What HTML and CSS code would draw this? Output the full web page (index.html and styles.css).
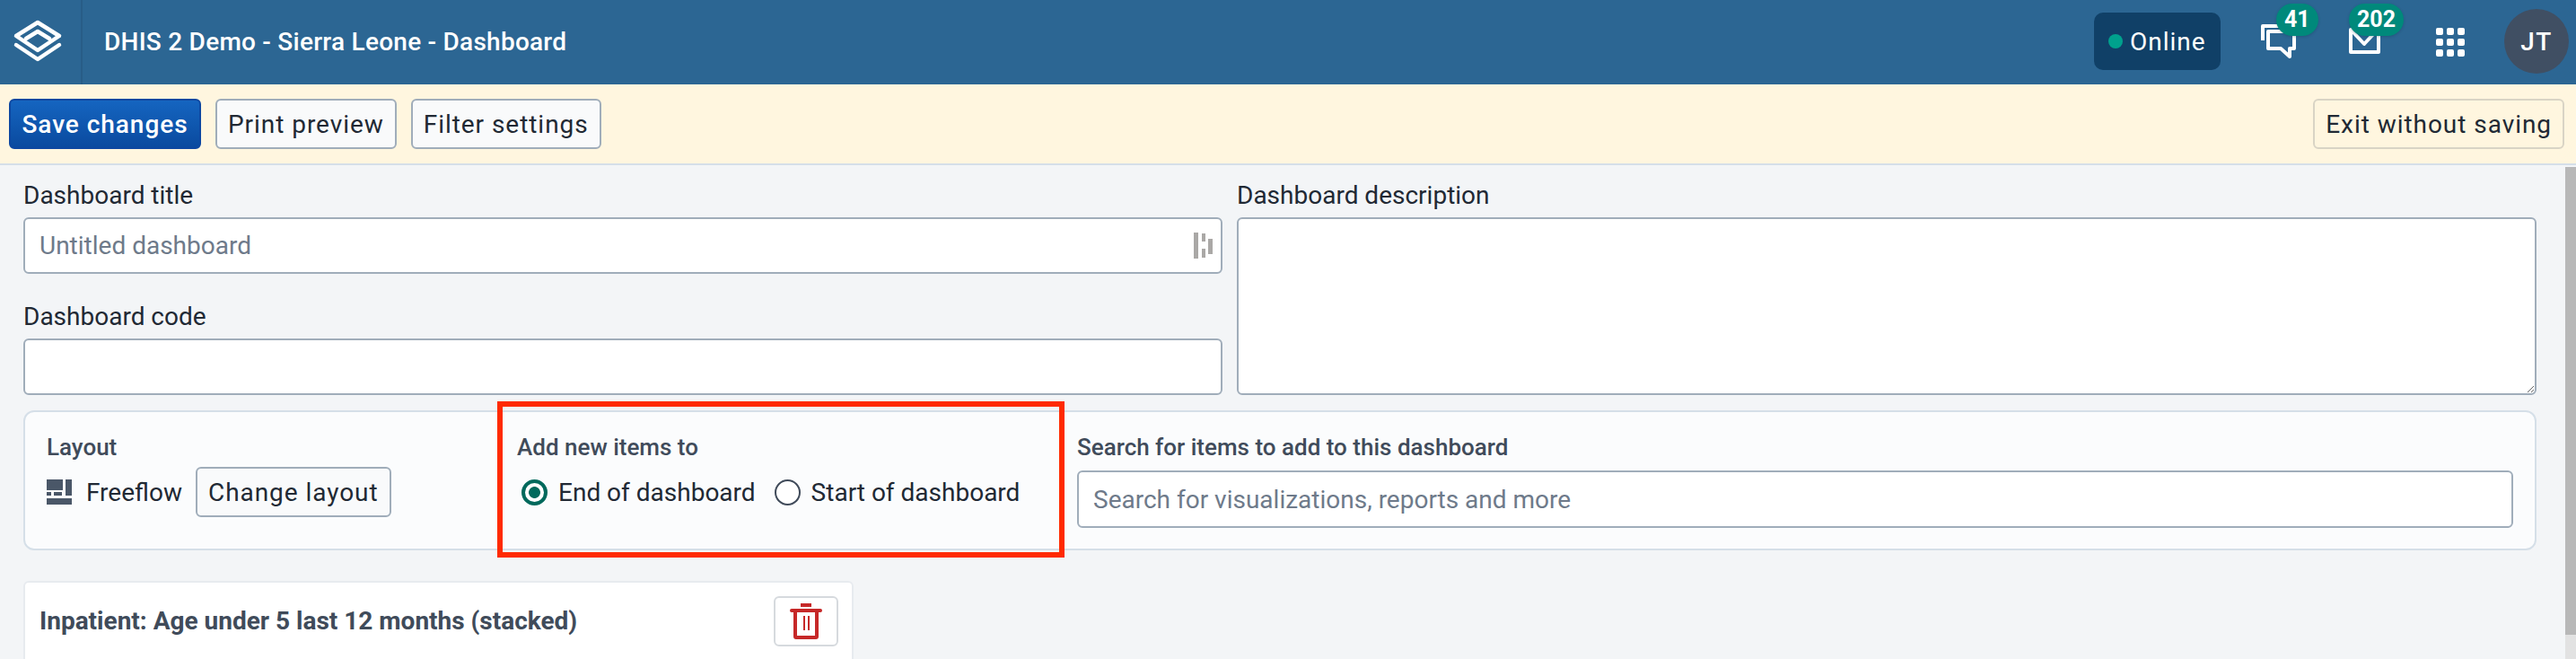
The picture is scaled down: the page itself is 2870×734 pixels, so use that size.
FILE: index.html
```html
<!DOCTYPE html>
<html lang="en">
<head>
<meta charset="utf-8">
<title>DHIS 2 Demo - Sierra Leone - Dashboard</title>
<link rel="stylesheet" href="styles.css">
</head>
<body>
<header class="topbar">
  <div class="logo">
    <svg width="90" height="92" viewBox="0 0 90 92" fill="none" stroke="#fff" stroke-width="4.5" stroke-linejoin="round" stroke-linecap="round">
      <path d="M42 25 66 40 42 56 18 40Z"/>
      <path d="M29 43 42 35 55 43"/>
      <path d="M18 50 42 66 66 50"/>
    </svg>
  </div>
  <div class="app-title">DHIS 2 Demo - Sierra Leone - Dashboard</div>
  <div class="top-right">
    <div class="online"><span class="online-dot"></span>Online</div>
    <div class="top-icon top-icon-chat">
      <svg width="48" height="48" viewBox="0 0 48 48" fill="none" stroke="#fff" stroke-width="4" stroke-linejoin="round">
        <path d="M7 23V7H30"/>
        <path d="M13 13H42V32H37V41L27 32H13Z"/>
      </svg>
      <span class="badge">41</span>
    </div>
    <div class="top-icon top-icon-mail">
      <svg width="48" height="48" viewBox="0 0 48 48" fill="none" stroke="#fff" stroke-width="4" stroke-linejoin="round">
        <path d="M9 11H40V36H9Z"/>
        <path d="M10 12 24 27 38 12"/>
      </svg>
      <span class="badge">202</span>
    </div>
    <div class="top-icon">
      <svg width="48" height="48" viewBox="0 0 48 48" fill="#fff">
        <rect x="8" y="9" width="8" height="8" rx="2"/><rect x="20" y="9" width="8" height="8" rx="2"/><rect x="32" y="9" width="8" height="8" rx="2"/>
        <rect x="8" y="21" width="8" height="8" rx="2"/><rect x="20" y="21" width="8" height="8" rx="2"/><rect x="32" y="21" width="8" height="8" rx="2"/>
        <rect x="8" y="33" width="8" height="8" rx="2"/><rect x="20" y="33" width="8" height="8" rx="2"/><rect x="32" y="33" width="8" height="8" rx="2"/>
      </svg>
    </div>
    <div class="avatar">JT</div>
  </div>
</header>

<div class="toolbar">
  <button class="btn btn-primary" type="button">Save changes</button>
  <button class="btn" type="button">Print preview</button>
  <button class="btn" type="button">Filter settings</button>
  <button class="btn btn-exit" type="button">Exit without saving</button>
</div>

<div class="body-row">
  <main class="content">
    <section class="fields">
      <div class="field-col">
        <div class="field">
          <label class="label" for="title">Dashboard title</label>
          <div class="input-wrap">
            <input class="input" id="title" type="text" placeholder="Untitled dashboard">
            <svg class="ext-icon" width="21" height="29" viewBox="0 0 21 29" fill="#aaa8a6">
              <rect x="0" y="0" width="5" height="29"/>
              <rect x="9" y="1" width="4" height="9"/>
              <rect x="9" y="18" width="4" height="10"/>
              <rect x="16" y="7" width="5" height="17"/>
            </svg>
          </div>
        </div>
        <div class="field">
          <label class="label" for="code">Dashboard code</label>
          <input class="input" id="code" type="text">
        </div>
      </div>
      <div class="field field-desc">
        <label class="label" for="desc">Dashboard description</label>
        <textarea class="input textarea" id="desc"></textarea>
      </div>
    </section>

    <section class="panel">
      <div class="group group-layout">
        <div class="group-label">Layout</div>
        <div class="group-row">
          <svg class="layout-icon" width="28" height="28" viewBox="0 0 28 28" fill="#4a5768">
            <rect x="0" y="0" width="18" height="12"/>
            <rect x="21" y="0" width="7" height="18"/>
            <rect x="0" y="14" width="5" height="4"/>
            <rect x="8" y="14" width="9" height="4"/>
            <rect x="0" y="21" width="28" height="7"/>
          </svg>
          <span class="layout-name">Freeflow</span>
          <button class="btn btn-change" type="button">Change layout</button>
        </div>
      </div>
      <div class="group group-add">
        <div class="group-label">Add new items to</div>
        <div class="group-row">
          <label class="radio"><input type="radio" name="pos" checked><span>End of dashboard</span></label>
          <label class="radio"><input type="radio" name="pos"><span>Start of dashboard</span></label>
        </div>
      </div>
      <div class="group group-search">
        <div class="group-label">Search for items to add to this dashboard</div>
        <input class="input input-search" type="text" placeholder="Search for visualizations, reports and more">
      </div>
      <div class="highlight"></div>
    </section>

    <article class="card">
      <h2 class="card-title">Inpatient: Age under 5 last 12 months (stacked)</h2>
      <button class="btn btn-delete" type="button" aria-label="Delete">
        <svg width="36" height="40" viewBox="0 0 36 40" fill="#c62828">
          <rect x="12" y="0" width="12" height="4"/>
          <rect x="0" y="6" width="36" height="4" rx="2"/>
          <path d="M4 9H32V37A3 3 0 0 1 29 40H7A3 3 0 0 1 4 37ZM8 10V36H28V10Z" fill-rule="evenodd"/>
          <rect x="15" y="14" width="2" height="16"/>
          <rect x="20" y="14" width="2" height="16"/>
        </svg>
      </button>
    </article>
  </main>
  <div class="scrollbar"><div class="scroll-thumb"></div></div>
</div>
</body>
</html>
```
FILE: styles.css
```css
* { box-sizing: border-box; }
html, body { height: 100%; }
body {
  margin: 0;
  height: 734px;
  overflow: hidden;
  display: flex;
  flex-direction: column;
  background: #f3f5f7;
  color: #212934;
  font-family: Roboto, "Liberation Sans", sans-serif;
  font-size: 28px;
}

/* Header */
.topbar {
  flex: none;
  height: 94px;
  padding-bottom: 2px;
  background: #2c6693;
  color: #fff;
  display: flex;
  align-items: center;
}
.logo {
  width: 92px;
  height: 94px;
  margin-bottom: -2px;
  border-right: 2px solid #285d87;
  flex: none;
}
.logo svg { display: block; }
.app-title {
  margin-left: 24px;
  font-size: 28px;
  font-weight: 500;
  letter-spacing: 0.25px;
}
.top-right {
  margin-left: auto;
  padding-right: 8px;
  display: flex;
  align-items: center;
}
.online {
  width: 141px;
  height: 64px;
  margin-right: 16px;
  padding-left: 16px;
  border-radius: 10px;
  background: #104067;
  display: flex;
  align-items: center;
  gap: 8px;
  font-size: 28px;
  letter-spacing: 1px;
}
.online-dot {
  width: 16px;
  height: 16px;
  border-radius: 50%;
  background: #00a18d;
}
.top-icon {
  position: relative;
  width: 96px;
  height: 48px;
  display: flex;
  justify-content: center;
}
.badge {
  position: absolute;
  top: -18px;
  height: 36px;
  padding: 0 9px;
  border-radius: 18px;
  background: #00897b;
  box-shadow: 0 1px 3px rgba(20, 50, 80, .3);
  font-size: 25px;
  font-weight: 700;
  line-height: 36px;
}
.top-icon-chat .badge { left: 46px; }
.top-icon-mail .badge { left: 31px; }
.avatar {
  width: 72px;
  height: 72px;
  margin-left: 12px;
  border-radius: 50%;
  background: #404f63;
  display: flex;
  align-items: center;
  justify-content: center;
  font-size: 28px;
  font-weight: 500;
  letter-spacing: 1.5px;
}

/* Toolbar */
.toolbar {
  flex: none;
  height: 90px;
  padding: 16px 13px 0 10px;
  background: #fff6df;
  border-bottom: 2px solid #d5dfe8;
  display: flex;
  align-items: flex-start;
  gap: 16px;
}
.btn {
  height: 56px;
  padding: 0 12px;
  border: 2px solid #a0adba;
  border-radius: 6px;
  background: #f9fafb;
  color: #212934;
  font-family: inherit;
  font-size: 28px;
  letter-spacing: 0.95px;
  cursor: pointer;
}
.btn-primary {
  width: 214px;
  padding: 0;
  border-color: #0d47a1;
  background: linear-gradient(#1565c0, #0a4a9f);
  color: #fff;
  font-weight: 500;
}
.btn-exit {
  margin-left: auto;
  border-color: #d9d4c5;
  background: #fff6df;
}

/* Body */
.body-row {
  flex: 1;
  min-height: 0;
  display: flex;
}
.content {
  flex: 1;
  min-width: 0;
  padding: 16px 32px 0 26px;
  overflow: hidden;
}
.scrollbar {
  flex: none;
  width: 12px;
  margin-top: 2px;
  background: #e2e2e2;
}
.scroll-thumb {
  height: 521px;
  background: #b8b8b8;
}

/* Fields */
.fields {
  display: grid;
  grid-template-columns: 1336px 1fr;
  column-gap: 16px;
}
.field-col {
  display: flex;
  flex-direction: column;
  gap: 30px;
}
.field { display: flex; flex-direction: column; }
.field-desc { height: 240px; }
.label {
  height: 34px;
  margin-bottom: 8px;
  padding-top: 1px;
  line-height: 34px;
  color: #212934;
}
.input-wrap { position: relative; }
.input {
  display: block;
  width: 100%;
  height: 63px;
  padding: 0 16px;
  border: 2px solid #a0adba;
  border-radius: 6px;
  background: #fff;
  color: #212934;
  font-family: inherit;
  font-size: 28px;
  outline: none;
}
.input::placeholder { color: #6e7a8a; opacity: 1; }
.textarea { flex: 1; height: auto; resize: both; padding: 12px 16px; }
.ext-icon {
  position: absolute;
  top: 17px;
  right: 11px;
}

/* Panel */
.panel {
  position: relative;
  height: 156px;
  margin-top: 17px;
  padding: 21px 24px 0 24px;
  border: 2px solid #d5dfe8;
  border-radius: 12px;
  background: #fbfcfd;
  display: flex;
}
.group { flex: none; }
.group-layout { width: 524px; }
.group-add { width: 624px; }
.group-search { flex: 1; min-width: 0; }
.group-label {
  height: 36px;
  line-height: 36px;
  font-size: 26px;
  font-weight: 500;
  color: #404b5a;
}
.group-row {
  margin-top: 4px;
  height: 56px;
  display: flex;
  align-items: center;
}
.layout-name { margin-left: 16px; }
.btn-change { margin-left: 15px; }
.radio {
  display: flex;
  align-items: center;
  gap: 12px;
  margin-left: 5px;
  margin-right: 16px;
}
.radio input {
  appearance: none;
  width: 29px;
  height: 29px;
  margin: 0;
  border: 2px solid #404b5a;
  border-radius: 50%;
  background: #fff;
}
.radio input:checked {
  border: 4px solid #00695c;
  background: radial-gradient(circle, #00695c 6px, #fff 6.8px);
}
.input-search { margin-top: 8px; height: 64px; }
.highlight {
  position: absolute;
  left: 526px;
  top: -12px;
  width: 632px;
  height: 174px;
  border: 6px solid #ff2a00;
  pointer-events: none;
}

/* Card */
.card {
  width: 925px;
  height: 120px;
  margin-top: 34px;
  padding: 15px 15px 0 16px;
  border: 2px solid #e7ebef;
  border-radius: 6px;
  background: #fff;
  display: flex;
  justify-content: space-between;
  align-items: flex-start;
}
.card-title {
  margin: 0;
  height: 56px;
  line-height: 56px;
  font-size: 28px;
  font-weight: 700;
  color: #404b5a;
}
.btn-delete {
  width: 72px;
  padding: 0;
  border-color: #d6dade;
  background: #fff;
  display: flex;
  align-items: center;
  justify-content: center;
}
```
